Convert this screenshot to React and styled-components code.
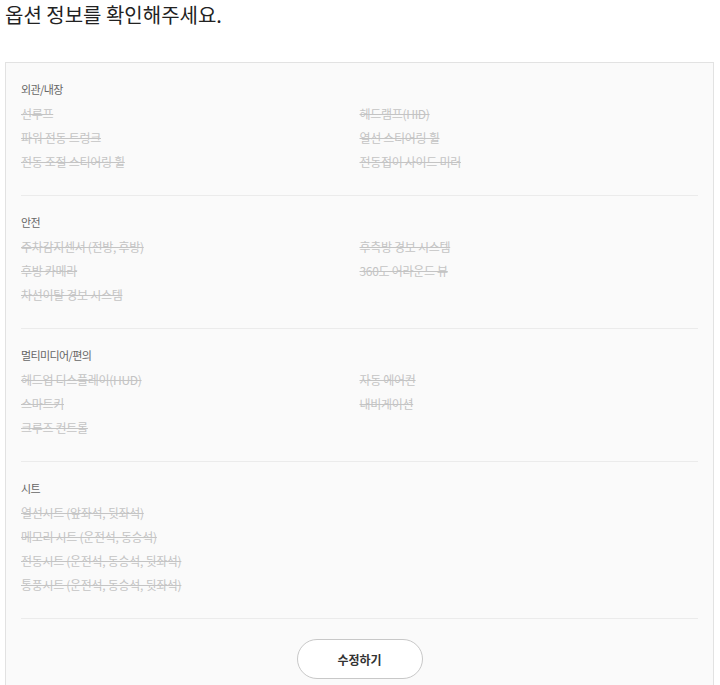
import React from 'react';
import styled, { createGlobalStyle } from 'styled-components';

const sections = [
  {
    title: '외관/내장',
    left: ['선루프', '파워 전동 트렁크', '전동 조절 스티어링 휠'],
    right: ['헤드램프(HID)', '열선 스티어링 휠', '전동접이 사이드 미러'],
  },
  {
    title: '안전',
    left: ['주차감지센서 (전방, 후방)', '후방 카메라', '차선이탈 경보 시스템'],
    right: ['후측방 경보 시스템', '360도 어라운드 뷰'],
  },
  {
    title: '멀티미디어/편의',
    left: ['헤드업 디스플레이(HUD)', '스마트키', '크루즈 컨트롤'],
    right: ['자동 에어컨', '내비게이션'],
  },
  {
    title: '시트',
    left: [
      '열선시트 (앞좌석, 뒷좌석)',
      '메모리 시트 (운전석, 동승석)',
      '전동시트 (운전석, 동승석, 뒷좌석)',
      '통풍시트 (운전석, 동승석, 뒷좌석)',
    ],
    right: [],
  },
];

export default function App() {
  return (
    <>
      <GlobalStyle />
      <Page>
        <Heading>옵션 정보를 확인해주세요.</Heading>
        <Panel>
          {sections.map((s) => (
            <Section key={s.title}>
              <SectionTitle>{s.title}</SectionTitle>
              <Columns>
                <List>
                  {s.left.map((item) => (
                    <Item key={item}>{item}</Item>
                  ))}
                </List>
                <List>
                  {s.right.map((item) => (
                    <Item key={item}>{item}</Item>
                  ))}
                </List>
              </Columns>
            </Section>
          ))}
          <Actions>
            <EditButton>수정하기</EditButton>
          </Actions>
        </Panel>
      </Page>
    </>
  );
}

const GlobalStyle = createGlobalStyle`
  body {
    margin: 0;
    background: #fff;
    font-family: "Noto Sans CJK KR", "Noto Sans", sans-serif;
  }
`;

const Page = styled.div`
  padding: 0 6px 0 5px;
`;

const Heading = styled.h1`
  margin: 0 0 32px;
  font-size: 20px;
  line-height: 30px;
  font-weight: 400;
  color: #222;
`;

const Panel = styled.div`
  border: 1px solid #e2e2e2;
  background: #fafafa;
  padding: 0 15px 40px;
`;

const Section = styled.div`
  padding: 19px 0 21px;
  border-bottom: 1px solid #ebebeb;
`;

const SectionTitle = styled.div`
  font-size: 11px;
  line-height: 14px;
  letter-spacing: -0.6px;
  color: #666;
  margin-bottom: 6px;
`;

const Columns = styled.div`
  display: grid;
  grid-template-columns: 1fr 1fr;
`;

const List = styled.ul`
  margin: 0;
  padding: 0;
  list-style: none;
`;

const Item = styled.li`
  font-size: 12px;
  line-height: 24px;
  letter-spacing: -0.3px;
  color: #c4c4c4;
  text-decoration: line-through;
`;

const Actions = styled.div`
  display: flex;
  justify-content: center;
  padding-top: 20px;
`;

const EditButton = styled.button`
  width: 126px;
  height: 40px;
  border: 1px solid #c8c8c8;
  border-radius: 20px;
  background: #fff;
  font-family: inherit;
  font-size: 12px;
  font-weight: 700;
  color: #333;
  cursor: pointer;
`;
